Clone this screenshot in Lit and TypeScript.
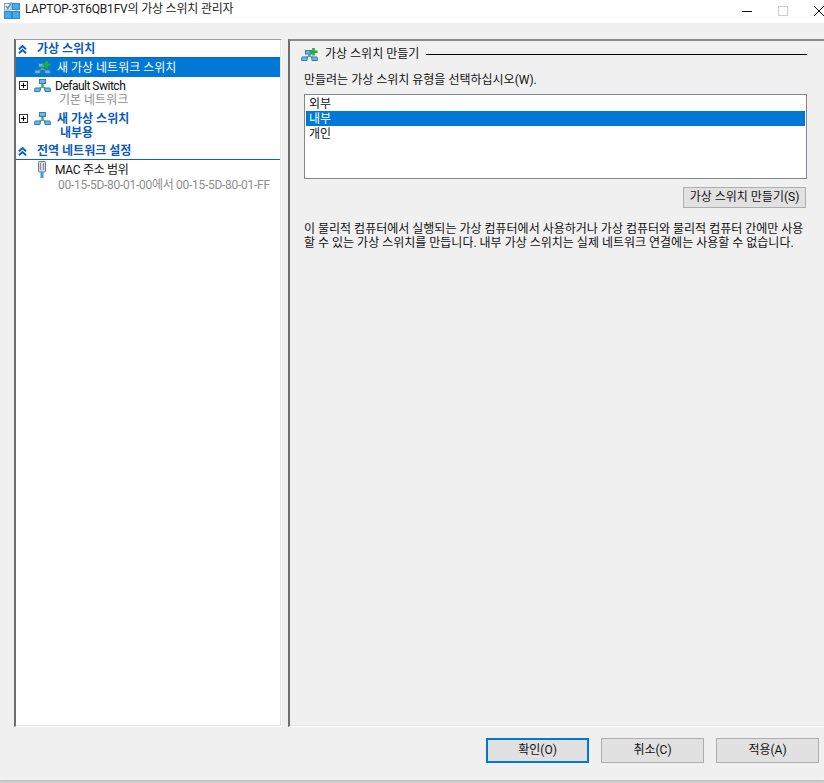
import { LitElement, html, css, svg } from "lit";
import { customElement } from "lit/decorators.js";

const netBody = svg`
  <path d="M8.5 4V9" stroke="#35b044" stroke-width="2.4"/>
  <path d="M3.5 10.5 8.5 7.8 13.5 10.5" fill="none" stroke="#4dbd55" stroke-width="1.5"/>
  <path d="M1 9H6.5L6 12.5H.5Z" fill="#6fb4ea" stroke="#2f7cc0"/>
  <path d="M10.5 9H16L16.5 12.5H11Z" fill="#6fb4ea" stroke="#2f7cc0"/>`;
const net = html`<svg width="17" height="13" viewBox="0 0 17 13">
  ${netBody}
  <rect x="5.5" y=".5" width="6" height="4" fill="#6fb4ea" stroke="#2f7cc0"/>
</svg>`;
const netPlus = html`<svg width="17" height="13" viewBox="0 0 17 13">
  ${netBody}
  <rect x="4.5" y="2.5" width="6" height="3.5" fill="#6fb4ea" stroke="#2f7cc0"/>
  <path d="M12.5 0V7.5M8.5 3.7H16.5" stroke="#1fae3a" stroke-width="2.6"/>
</svg>`;

const chevrons = html`<svg class="chev" width="9" height="9" viewBox="0 0 9 9"><path d="M1 4.2 4.5 1 8 4.2M1 8.2 4.5 5 8 8.2" fill="none" stroke="#0a5fc4" stroke-width="2"/></svg>`;
const box = html`<svg width="9" height="9" viewBox="0 0 9 9"><rect x=".5" y=".5" width="8" height="8" fill="#fff" stroke="#333"/><path d="M2 4.5H7M4.5 2V7" stroke="#000"/></svg>`;
const nic = html`<svg width="9" height="17" viewBox="0 0 9 17"><rect x=".5" y=".5" width="7" height="10.5" rx="1" fill="#d5d9dd" stroke="#6f7880"/><path d="M2.5 2V9M5.5 2V9" stroke="#8a949c"/><rect x="2.5" y="11" width="3" height="6" fill="#39a0d8"/></svg>`;

@customElement("app-root")
export class AppRoot extends LitElement {
  static styles = css`
    :host { display:block; width:824px; height:783px; background:#d0d0d0; overflow:hidden;
      font:12px/15px Roboto,"Noto Sans CJK KR",sans-serif; color:#111; }
    .win { height:780px; background:#f0f0f0; display:flex; flex-direction:column; box-shadow:0 1px 2px #bbb; }
    .title { height:23px; background:#fff; display:flex; align-items:center; flex:none; padding-left:4px; gap:5px; }
    .title .t { line-height:15px; margin-top:-4px; color:#222; letter-spacing:-.2px; }
    .title svg.app { margin-top:-3px; }
    .ctl { margin-left:auto; margin-right:-13px; display:flex; align-items:center; height:20px; margin-top:-2px; }
    .ctl span { display:flex; width:36px; justify-content:center; }
    .main { flex:none; height:688px; margin-top:16px; padding:0 0 0 14px; display:flex; gap:6px; }
    .left { width:264px; background:#fff; border-style:solid; border-color:#a0a0a0 #fff #fff #6d6d6d; border-width:1px 1px 1px 2px; box-shadow:inset 0 -1px #e3e3e3, inset -1px 0 #e3e3e3; padding:1px 1px 0 0; }
    .right { flex:1; background:#f0f0f0; border-style:solid; border-color:#8a8a8a #fff #fff #6d6d6d; border-width:2px 0 1px 2px; box-shadow:inset 0 -1px #e3e3e3; padding:5px 17px 0 11px; }
    .hd { display:flex; align-items:center; gap:10px; padding:0 0 1px 2px; border-bottom:1px solid #0a63c8; color:#0a5bbd; font-weight:700; height:15px; }
    .hd span { padding-top:1px; }
    .chev { margin-top:2px; }
    .row { display:flex; align-items:center; height:19px; }
    .row.d { height:17px; }
    .row.n { height:15px; margin-top:6px; }
    .sel { background:#0078d7; color:#fff; }
    .ex { width:9px; margin-left:3px; display:flex; }
    .ic { margin-left:6px; width:17px; display:flex; }
    .lab { margin-left:4px; white-space:nowrap; padding-top:1px; }
    .lab.w { margin-left:6px; }
    .lab.tight { letter-spacing:-.5px; }
    .lab.mc { letter-spacing:-.3px; }
    .blue { color:#0a5bbd; font-weight:700; }
    .sub { height:11px; line-height:13px; padding-left:43px; color:#8e8e8e; white-space:nowrap; }
    .sub.b { height:13px; line-height:15px; padding-left:44px; color:#0a5bbd; font-weight:700; margin-bottom:4px; }
    .sub.r { height:13px; line-height:13px; padding-left:42px; letter-spacing:-.28px; }
    .mac { padding-left:4px; width:13px; }
    .grp { display:flex; align-items:center; height:16px; }
    .grp .tx { margin-left:7px; white-space:nowrap; }
    .grp .ln { flex:1; height:1px; background:#000; margin-left:7px; }
    .lbl { margin:11px 0 0 3px; height:14px; }
    .list { margin:7px 0 0 3px; height:81px; background:#fff; border:1px solid #828790; padding:1px; }
    .it { height:14px; padding-top:1px; padding-left:3px; }
    .it.on { background:#0078d7; color:#fff; }
    .bar { display:flex; justify-content:flex-end; margin-top:8px; }
    button { font:inherit; color:#111; background:#e1e1e1; border:1px solid #adadad; padding:0; margin:0; white-space:nowrap; }
    .mk { width:123px; height:21px; margin-right:1px; }
    .desc { margin:14px 0 0 3px; line-height:14px; width:503px; }
    .foot { flex:none; display:flex; gap:12px; justify-content:flex-end; padding:11px 5px 0 0; }
    .foot button { width:103px; height:25px; }
    .foot .pri { border:2px solid #0078d7; }
  `;
  render() {
    return html`<div class="win">
      <div class="title">
        <svg class="app" width="16" height="17" viewBox="0 0 16 17">
          <path d="M4 5H12M4 13H12M12 8V13" stroke="#3f9be0" fill="none"/>
          <rect x=".5" y="1.5" width="6.5" height="6.5" fill="#fff" stroke="#8a9aa8"/>
          <path d="M2 4 3.8 6.5 7.5 .5" fill="none" stroke="#3f9be0" stroke-width="1.6"/>
          <rect x="8.5" y="1.5" width="7" height="6" fill="#4aa8e8" stroke="#2f8bd0"/>
          <rect x=".5" y="9.5" width="7" height="7" fill="#4aa8e8" stroke="#2f8bd0"/>
          <rect x="8.5" y="9.5" width="7" height="7" fill="#4aa8e8" stroke="#2f8bd0"/>
        </svg>
        <span class="t">LAPTOP-3T6QB1FV의 가상 스위치 관리자</span>
        <div class="ctl">
          <span><svg width="10" height="10"><path d="M0 5.5H10" stroke="#111"/></svg></span>
          <span><svg width="10" height="10"><rect x=".5" y=".5" width="9" height="9" fill="none" stroke="#ccc"/></svg></span>
          <span><svg width="10" height="10"><path d="M0 0 10 10M10 0 0 10" stroke="#111"/></svg></span>
        </div>
      </div>
      <div class="main">
        <div class="left">
          <div class="hd">${chevrons}<span>가상 스위치</span></div>
          <div class="row sel"><span class="ex"></span><span class="ic">${netPlus}</span><span class="lab w">새 가상 네트워크 스위치</span></div>
          <div class="row d"><span class="ex">${box}</span><span class="ic">${net}</span><span class="lab tight">Default Switch</span></div>
          <div class="sub">기본 네트워크</div>
          <div class="row n"><span class="ex">${box}</span><span class="ic">${net}</span><span class="lab w blue">새 가상 스위치</span></div>
          <div class="sub b">내부용</div>
          <div class="hd">${chevrons}<span>전역 네트워크 설정</span></div>
          <div class="row"><span class="ex"></span><span class="ic mac">${nic}</span><span class="lab mc">MAC 주소 범위</span></div>
          <div class="sub r">00-15-5D-80-01-00에서 00-15-5D-80-01-FF</div>
        </div>
        <div class="right">
          <div class="grp">${netPlus}<span class="tx">가상 스위치 만들기</span><span class="ln"></span></div>
          <div class="lbl">만들려는 가상 스위치 유형을 선택하십시오(W).</div>
          <div class="list"><div class="it">외부</div><div class="it on">내부</div><div class="it">개인</div></div>
          <div class="bar"><button class="mk">가상 스위치 만들기(S)</button></div>
          <div class="desc">이 물리적 컴퓨터에서 실행되는 가상 컴퓨터에서 사용하거나 가상 컴퓨터와 물리적 컴퓨터 간에만 사용할 수 있는 가상 스위치를 만듭니다. 내부 가상 스위치는 실제 네트워크 연결에는 사용할 수 없습니다.</div>
        </div>
      </div>
      <div class="foot"><button class="pri">확인(O)</button><button>취소(C)</button><button>적용(A)</button></div>
    </div>`;
  }
}
